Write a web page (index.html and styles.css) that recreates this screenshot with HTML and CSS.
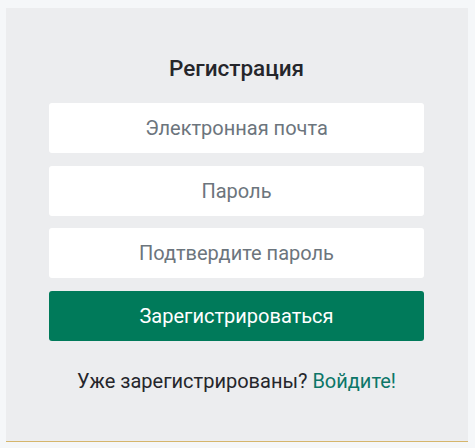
FILE: index.html
```html
<!DOCTYPE html>
<html lang="ru">
<head>
<meta charset="utf-8">
<title>Регистрация</title>
<link rel="stylesheet" href="styles.css">
</head>
<body>
<div class="card">
  <h1 class="title">Регистрация</h1>
  <form class="form">
    <input class="field" type="email" placeholder="Электронная почта">
    <input class="field" type="password" placeholder="Пароль">
    <input class="field" type="password" placeholder="Подтвердите пароль">
    <button class="submit" type="button">Зарегистрироваться</button>
  </form>
  <p class="note">Уже зарегистрированы? <a class="link" href="#">Войдите!</a></p>
</div>
</body>
</html>
```
FILE: styles.css
```css
html, body {
  margin: 0;
  padding: 0;
  background: #f5f7f9;
  font-family: Roboto, "Liberation Sans", sans-serif;
}
.card {
  margin: 8px 7px 0 6px;
  width: 462px;
  height: 434px;
  box-sizing: border-box;
  background: #ecedef;
  border-bottom: 1px solid #d5b56c;
  padding: 45px 44px 0 43px;
  display: flex;
  flex-direction: column;
}
.title {
  margin: 0 0 20px;
  font-size: 22.5px;
  line-height: 30px;
  font-weight: 500;
  color: #25262b;
  text-align: center;
}
.form {
  display: flex;
  flex-direction: column;
  gap: 12.67px;
  margin: 0;
}
.field {
  height: 50px;
  box-sizing: border-box;
  border: none;
  border-radius: 3px;
  background: #fff;
  font-family: inherit;
  font-size: 20px;
  text-align: center;
  color: #212529;
  padding: 0;
  outline: none;
}
.field::placeholder {
  color: #6c757d;
  opacity: 1;
}
.submit {
  height: 50px;
  border: none;
  border-radius: 3px;
  background: #007a5a;
  color: #fff;
  font-family: inherit;
  font-size: 20px;
  padding: 0;
  cursor: pointer;
}
.note {
  margin: 27px 0 0;
  font-size: 20px;
  line-height: 26px;
  color: #25262b;
  text-align: center;
}
.link {
  color: #0c7668;
  text-decoration: none;
}
```
